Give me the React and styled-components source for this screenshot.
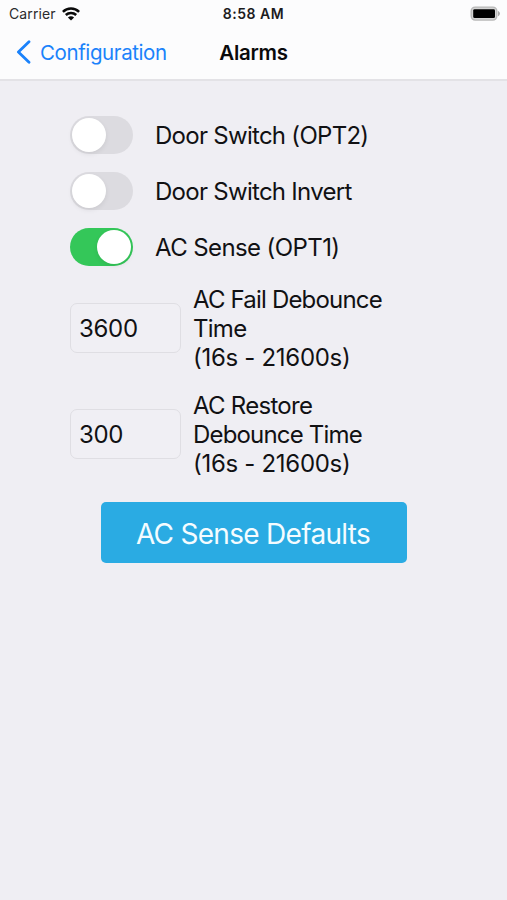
import React from "react";
import styled, { createGlobalStyle } from "styled-components";
import { useState } from "react";

const GlobalStyle = createGlobalStyle`
  * {
    box-sizing: border-box;
  }
  body {
    margin: 0;
    background: #efeef3;
    color: #111113;
    font-family: Inter, "Liberation Sans", sans-serif;
  }
`;

const Screen = styled.div`
  width: 100%;
  min-height: 900px;
  background: #efeef3;
`;

const Header = styled.header`
  height: 81px;
  background: #fcfcfd;
  border-bottom: 2px solid #e3e2e6;
`;

const StatusBar = styled.div`
  display: grid;
  grid-template-columns: 1fr auto 1fr;
  align-items: center;
  height: 27px;
  padding: 0 7px;
  svg {
    display: block;
    overflow: visible;
  }
`;

const Carrier = styled.div`
  display: flex;
  align-items: center;
  gap: 6px;
  padding-left: 2px;
  font-size: 14px;
  letter-spacing: 0.12px;
  color: #2b2b2d;
`;

const Clock = styled.div`
  font-size: 14px;
  font-weight: 600;
  letter-spacing: 0.5px;
  color: #1c1c1e;
`;

const Battery = styled.div`
  justify-self: end;
`;

const NavBar = styled.nav`
  display: grid;
  grid-template-columns: 1fr auto 1fr;
  align-items: center;
  height: 50px;
  padding: 0 16px;
`;

const BackLink = styled.a`
  display: flex;
  align-items: center;
  gap: 9px;
  font-size: 20.5px;
  letter-spacing: -0.4px;
  color: #1a82fb;
`;

const Title = styled.h1`
  margin: 0;
  font-size: 20.5px;
  font-weight: 600;
  letter-spacing: -0.3px;
  color: #0a0a0b;
`;

const Content = styled.main`
  display: flex;
  flex-direction: column;
  padding: 26px 70px 0;
`;

const SwitchRow = styled.div`
  display: flex;
  align-items: center;
  gap: 22px;
  height: 56px;
`;

const Switch = styled.button`
  flex: none;
  display: flex;
  align-items: center;
  justify-content: ${(props) => (props.$on ? "flex-end" : "flex-start")};
  width: 63px;
  height: 38px;
  padding: 0 2px;
  border: 0;
  border-radius: 19px;
  background: ${(props) => (props.$on ? "#34c759" : "#dcdbe0")};
`;

const Knob = styled.span`
  width: 34px;
  height: 34px;
  border-radius: 50%;
  background: #fff;
  box-shadow: 0 2px 5px rgba(0, 0, 0, 0.08);
`;

const Label = styled.span`
  font-size: 24px;
  line-height: 29px;
  letter-spacing: ${(props) => props.$spacing || "-0.72px"};
  white-space: nowrap;
`;

const FieldRow = styled.div`
  display: flex;
  align-items: center;
  gap: 12px;
  height: 106px;
`;

const Field = styled.input`
  flex: none;
  width: 111px;
  height: 50px;
  padding: 0 8px;
  border: 1px solid #dfdee3;
  border-radius: 7px;
  background: #f0eff4;
  color: #111113;
  font-family: inherit;
  font-size: 24px;
  letter-spacing: -0.3px;
  outline: none;
`;

const FieldLabel = styled.div`
  display: flex;
  flex-direction: column;
`;

const DefaultsButton = styled.button`
  align-self: center;
  width: 306px;
  height: 61px;
  margin-top: 15px;
  padding: 2px 1px 0 0;
  border: 0;
  border-radius: 5px;
  background: #2aabe3;
  color: #f4fcff;
  font-family: inherit;
  font-size: 28px;
  letter-spacing: -0.7px;
`;

const WifiIcon = () => (
  <svg width="18" height="14" viewBox="0 0 18 14">
    <g fill="none" stroke="#0a0a0a" strokeWidth="2.5">
      <path d="M0.9 4.9C5.4 0.5 12.6 0.5 17.1 4.9" />
      <path d="M3.8 8C6.7 5.2 11.3 5.2 14.2 8" />
    </g>
    <path d="M9 13.6L5.9 10.4C7.6 8.9 10.4 8.9 12.1 10.4Z" fill="#0a0a0a" />
  </svg>
);

const BatteryIcon = () => (
  <svg width="30" height="16" viewBox="0 0 30 16">
    <rect x="1.2" y="1.1" width="25.6" height="13" rx="4" fill="#d4d4d4" stroke="#b8b8b8" strokeWidth="1.4" />
    <rect x="3.2" y="3.2" width="21.8" height="8.9" rx="1.4" fill="#000" />
    <path d="M28 5C30.6 6.2 30.6 9 28 10.2Z" fill="#aaa" />
  </svg>
);

const ChevronIcon = () => (
  <svg width="15" height="24" viewBox="0 0 15 24">
    <path
      d="M13 1.8L2.4 12L13 22.2"
      fill="none"
      stroke="#1a82fb"
      strokeWidth="2.8"
      strokeLinecap="round"
      strokeLinejoin="round"
    />
  </svg>
);

const switches = [
  { name: "Door Switch (OPT2)", on: false },
  { name: "Door Switch Invert", on: false },
  { name: "AC Sense (OPT1)", on: true, spacing: "-0.6px" },
];

const fields = [
  {
    value: "3600",
    lines: [
      { text: "AC Fail Debounce", spacing: "-0.82px" },
      { text: "Time" },
      { text: "(16s - 21600s)", spacing: "-0.3px" },
    ],
  },
  {
    value: "300",
    lines: [
      { text: "AC Restore" },
      { text: "Debounce Time", spacing: "-0.82px" },
      { text: "(16s - 21600s)", spacing: "-0.3px" },
    ],
  },
];

const App = () => {
  const [states, setStates] = useState(switches.map((item) => item.on));

  const toggle = (index) => {
    setStates(states.map((on, i) => (i === index ? !on : on)));
  };

  return (
    <Screen>
      <GlobalStyle />
      <Header>
        <StatusBar>
          <Carrier>
            Carrier
            <WifiIcon />
          </Carrier>
          <Clock>8:58 AM</Clock>
          <Battery>
            <BatteryIcon />
          </Battery>
        </StatusBar>
        <NavBar>
          <BackLink>
            <ChevronIcon />
            Configuration
          </BackLink>
          <Title>Alarms</Title>
        </NavBar>
      </Header>
      <Content>
        {switches.map((item, i) => (
          <SwitchRow key={item.name}>
            <Switch $on={states[i]} onClick={() => toggle(i)}>
              <Knob />
            </Switch>
            <Label $spacing={item.spacing}>{item.name}</Label>
          </SwitchRow>
        ))}
        {fields.map((field) => (
          <FieldRow key={field.value}>
            <Field defaultValue={field.value} />
            <FieldLabel>
              {field.lines.map((line) => (
                <Label key={line.text} $spacing={line.spacing}>
                  {line.text}
                </Label>
              ))}
            </FieldLabel>
          </FieldRow>
        ))}
        <DefaultsButton>AC Sense Defaults</DefaultsButton>
      </Content>
    </Screen>
  );
};

export default App;
